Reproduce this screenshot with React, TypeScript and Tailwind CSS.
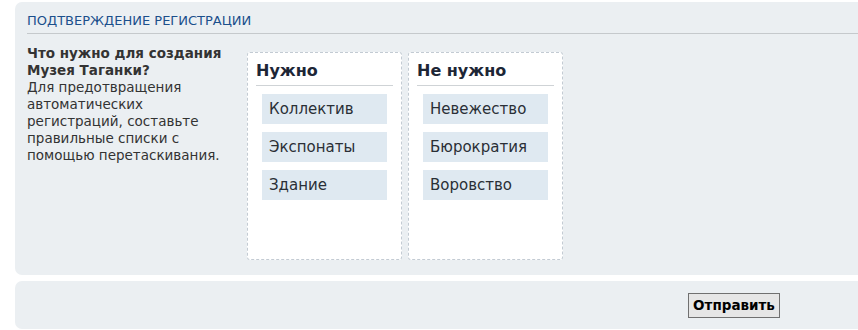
import React from 'react';

const needed = ['Коллектив', 'Экспонаты', 'Здание'];
const notNeeded = ['Невежество', 'Бюрократия', 'Воровство'];

const ListBox: React.FC<{ title: string; items: string[] }> = ({ title, items }) => (
  <div className="w-[155px] h-[208px] bg-white border border-dashed border-[#c3cbd3] rounded-[3px] px-[8px] pt-[7px]">
    <h3 className="text-[16px] leading-[22px] font-bold text-[#1d2636] border-b border-[#cfd3d6] pb-[3px]">{title}</h3>
    <ul className="flex flex-col gap-[8px] px-[6px] pt-[8px]">
      {items.map((item) => (
        <li key={item} className="h-[30px] bg-[#dfe9f1] pl-[7px] text-[15px] leading-[30px] text-[#2a2f36]">
          {item}
        </li>
      ))}
    </ul>
  </div>
);

export default function App() {
  return (
    <div className="w-[858px] h-[330px] overflow-hidden bg-white pl-[15px] pt-[2px] font-['DejaVu_Sans',Verdana,sans-serif]">
      <div className="w-[880px] h-[273px] rounded-[7px] bg-[#ebeff2] pl-[12px] pt-[10px]">
        <div className="border-b border-[#c5c9cc] pb-[3px] text-[13px] leading-[18px] text-[#1b4f8c]">
          ПОДТВЕРЖДЕНИЕ РЕГИСТРАЦИИ
        </div>
        <div className="flex pt-[11px]">
          <div className="w-[220px] text-[13.5px] leading-[17px] text-[#333]">
            <div className="font-bold">Что нужно для создания Музея Таганки?</div>
            <div className="w-[205px]">Для предотвращения автоматических регистраций, составьте правильные списки с помощью перетаскивания.</div>
          </div>
          <div className="flex gap-[6px] pt-[7px]">
            <ListBox title="Нужно" items={needed} />
            <ListBox title="Не нужно" items={notNeeded} />
          </div>
        </div>
      </div>
      <div className="mt-[6px] w-[880px] h-[48px] rounded-[7px] bg-[#ebeff2] pl-[673px] pt-[12px]">
        <button className="w-[92px] h-[25px] bg-[#e6e6e6] border border-[#707070] text-[13.5px] font-bold text-black">
          Отправить
        </button>
      </div>
    </div>
  );
}
